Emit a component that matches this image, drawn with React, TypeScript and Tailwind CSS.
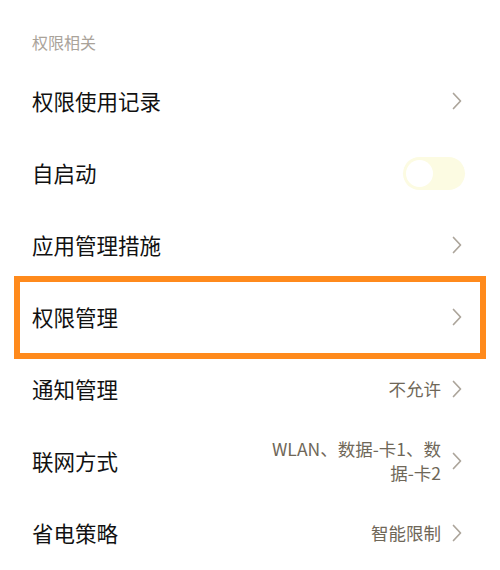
import { useState } from 'react'

type Row = {
  title: string
  value?: string
  toggle?: boolean
  highlight?: boolean
}

const ROWS: Row[] = [
  { title: '权限使用记录' },
  { title: '自启动', toggle: true },
  { title: '应用管理措施' },
  { title: '权限管理', highlight: true },
  { title: '通知管理', value: '不允许' },
  { title: '联网方式', value: 'WLAN、数据-卡1、数据-卡2' },
  { title: '省电策略', value: '智能限制' },
]

function Chevron() {
  return (
    <svg width="10" height="18" viewBox="0 0 10 18" className="shrink-0">
      <polyline points="1.5,1.5 8.5,9 1.5,16.5" fill="none" stroke="#aca59b" strokeWidth="1.7" strokeLinecap="round" strokeLinejoin="round" />
    </svg>
  )
}

function Toggle() {
  const [on, setOn] = useState(false)
  return (
    <button onClick={() => setOn(!on)}
      className={`w-[62px] h-[33px] rounded-full p-[3px] flex items-center ${on ? 'bg-[#f3e9a8] justify-end' : 'bg-[#fcfbe2] justify-start'}`}>
      <span className="w-[27px] h-[27px] rounded-full bg-white" />
    </button>
  )
}

export default function App() {
  return (
    <div className="w-[500px] h-[570px] bg-white overflow-hidden" style={{ fontFamily: '"Noto Sans CJK SC", "Noto Sans", sans-serif' }}>
      <div className="pt-[30px] px-8 text-base leading-6 text-[#aaa39a]">权限相关</div>
      <div className="mt-[11px]">
        {ROWS.map((row, i) => (
          <div key={i} className="relative h-[72px] flex items-center justify-between pl-8 pr-[38px]">
            {row.highlight && (
              <div className="absolute left-[14px] right-[14px] -top-[5px] -bottom-[6px] border-[6px] border-[#ff8a1c] pointer-events-none" />
            )}
            <span className="text-[21.5px] text-[#111111]">{row.title}</span>
            {row.toggle ? (
              <div className="-mr-[3px]"><Toggle /></div>
            ) : (
              <div className="flex items-center gap-[11px]">
                {row.value && (
                  <span className="text-[17.5px] leading-6 text-[#6f6758] text-right max-w-[178px]">{row.value}</span>
                )}
                <Chevron />
              </div>
            )}
          </div>
        ))}
      </div>
    </div>
  )
}
